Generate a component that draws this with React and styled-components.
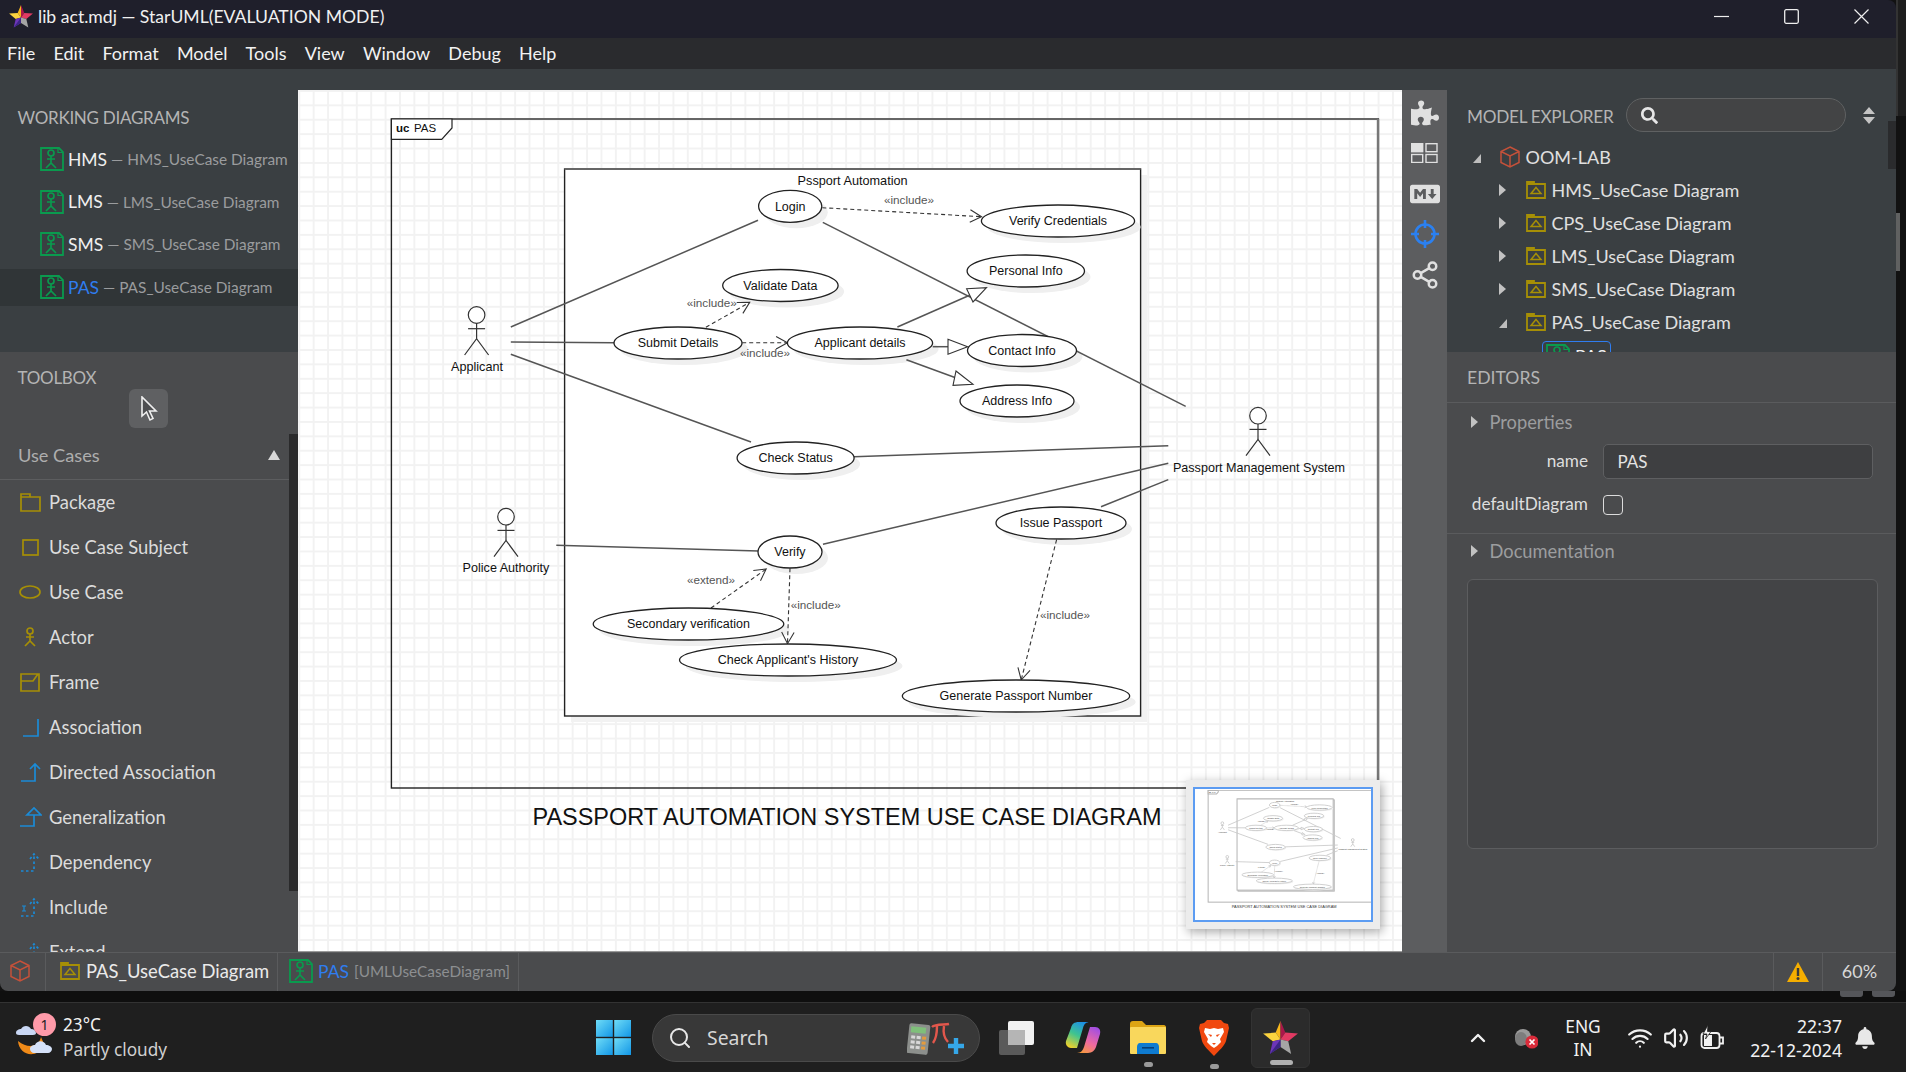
import React from 'react';
import styled, { createGlobalStyle } from 'styled-components';
import { Wifi, Volume2, ChevronUp, Search, Share2 } from 'lucide-react';
import { FaPuzzlePiece, FaMarkdown, FaSearch, FaBell } from 'react-icons/fa';

const UI_FONT = '"Lato", "Noto Sans", sans-serif';
const WIN_FONT = '"Noto Sans", "Open Sans", sans-serif';
const GOLD = '#a68f06';
const BLUE = '#1b8bd6';
const GREEN = '#0a9a4e';

const GlobalStyle = createGlobalStyle`
    html, body {
        margin: 0;
        padding: 0;
        width: 1906px;
        height: 1072px;
        overflow: hidden;
        background: #121212;
    }
    * { box-sizing: border-box; }
    svg { display: block; }
`;

const Page = styled.div`
    width: 1906px;
    height: 1072px;
    display: flex;
    flex-direction: column;
    font-family: ${UI_FONT};
    position: relative;
`;
const Window = styled.div`
    width: 1896px;
    height: 991px;
    display: flex;
    flex-direction: column;
    border-radius: 0 8px 8px 8px;
    overflow: hidden;
    position: relative;
`;
const TitleBar = styled.div`
    height: 38px;
    flex: none;
    background: #1f1f2b;
    display: flex;
    align-items: center;
    padding: 0 0 5px 9px;
    color: #f0f0f0;
    font-size: 17.6px;
    gap: 5px;
`;
const TitleControls = styled.div`
    margin-left: auto;
    display: flex;
`;
const TitleButton = styled.div`
    width: 70px;
    height: 33px;
    display: flex;
    align-items: center;
    justify-content: center;
`;
const MenuBar = styled.div`
    height: 31px;
    flex: none;
    background: #2a2b2e;
    display: flex;
    align-items: center;
    padding: 0 0 2px 7px;
    gap: 18.2px;
    color: #f2f2f2;
    font-size: 18px;
`;
const Workspace = styled.div`
    flex: 1;
    min-height: 0;
    display: flex;
`;
const LeftColumn = styled.div`
    width: 298px;
    flex: none;
    display: flex;
    flex-direction: column;
`;
const WorkingPanel = styled.div`
    height: 283px;
    flex: none;
    background: #3a3f42;
    padding-top: 37.5px;
`;
const PanelTitle = styled.div`
    height: 22px;
    line-height: 22px;
    padding-left: 17.5px;
    color: #b4b4b4;
    font-size: 17px;
    letter-spacing: -0.27px;
    white-space: nowrap;
`;
const WorkingRows = styled.div`
    margin-top: 12px;
    display: flex;
    flex-direction: column;
    gap: 5.7px;
`;
const WorkingRow = styled.div`
    height: 37px;
    display: flex;
    align-items: center;
    padding-left: 40px;
    gap: 4px;
    background: ${(p) => (p.$active ? '#303537' : 'transparent')};
    white-space: nowrap;
`;
const DiagramName = styled.span`
    font-size: 17.5px;
    color: ${(p) => (p.$active ? '#2f7df0' : '#f0f0f0')};
`;
const DiagramOwner = styled.span`
    font-size: 15.4px;
    color: #9a9c9e;
`;
const Toolbox = styled.div`
    flex: 1;
    min-height: 0;
    background: #4a4b4d;
    padding-top: 15px;
    position: relative;
    overflow: hidden;
`;
const CursorButton = styled.div`
    width: 39px;
    height: 39px;
    margin-left: 129px;
    background: #5f6062;
    border-radius: 6px;
    display: flex;
    align-items: center;
    justify-content: center;
`;
const SectionHeader = styled.div`
    width: 289px;
    height: 47px;
    margin-top: 4.5px;
    padding: 0 9px 1px 18px;
    display: flex;
    align-items: center;
    justify-content: space-between;
    border-bottom: 1px solid #5c5d5f;
    color: #aeaeae;
    font-size: 18.2px;
`;
const ToolRow = styled.div`
    height: 45px;
    display: flex;
    align-items: center;
    padding-left: 18px;
    gap: 7px;
    color: #dcdcdc;
    font-size: 18.4px;
    white-space: nowrap;
`;
const ToolScrollbar = styled.div`
    position: absolute;
    left: 289px;
    top: 82px;
    width: 9px;
    height: 457px;
    background: #2a2a2b;
`;
const CenterColumn = styled.div`
    width: 1104px;
    flex: none;
    display: flex;
    flex-direction: column;
`;
const TopGap = styled.div`
    height: 21px;
    flex: none;
    background: #3a3f42;
`;
const Canvas = styled.div`
    flex: 1;
    min-height: 0;
    position: relative;
    background-color: #fff;
    background-image:
        linear-gradient(to right, #f2f2f2 2px, transparent 2px),
        linear-gradient(to bottom, #f2f2f2 2px, transparent 2px);
    background-size: 14.4px 14.4px;
    background-position: 0.3px 0px;
    border-bottom: 1px solid #9a9a9a;
`;
const Minimap = styled.div`
    position: absolute;
    left: 888px;
    top: 690px;
    width: 194px;
    height: 149px;
    padding: 7px;
    background: #ececec;
    box-shadow: 2px 3px 10px rgba(0, 0, 0, 0.35);
`;
const MinimapView = styled.div`
    width: 100%;
    height: 100%;
    background: #fff;
    border: 2px solid #5c9cf2;
    overflow: hidden;
    line, polyline, ellipse, circle, polygon {
        stroke: #c8c8c8;
        stroke-width: 5px;
    }
    rect, path {
        stroke: #b4b4b4;
        stroke-width: 6px;
    }
    text {
        fill: #333;
    }
`;
const IconStrip = styled.div`
    width: 45px;
    flex: none;
    background: #5c5d5f;
    display: flex;
    flex-direction: column;
`;
const StripIcons = styled.div`
    display: flex;
    flex-direction: column;
    align-items: center;
    padding-top: 2.5px;
`;
const StripSlot = styled.div`
    height: 40.5px;
    display: flex;
    align-items: center;
    justify-content: center;
    color: ${(p) => p.$color || '#e0e0e0'};
`;
const RightColumn = styled.div`
    flex: 1;
    min-width: 0;
    display: flex;
    flex-direction: column;
    position: relative;
`;
const ExplorerPanel = styled.div`
    height: 283px;
    flex: none;
    background: #3a3f42;
    padding-top: 29px;
    overflow: hidden;
    position: relative;
`;
const ExplorerHeader = styled.div`
    height: 34px;
    padding-left: 20px;
    display: flex;
    align-items: center;
    color: #b4b4b4;
    font-size: 17.2px;
    letter-spacing: -0.27px;
`;
const ExplorerTitle = styled.span`
    padding-top: 2px;
`;
const SearchBox = styled.div`
    width: 220px;
    height: 34px;
    margin-left: 12.5px;
    padding-left: 14px;
    border-radius: 17px;
    border: 1px solid #5f6162;
    background: #434445;
    display: flex;
    align-items: center;
    color: #e6e6e6;
`;
const SortIcon = styled.div`
    margin-left: 16px;
`;
const Tree = styled.div`
    margin-top: 8px;
`;
const TreeRow = styled.div`
    height: 33px;
    display: flex;
    align-items: center;
    padding-left: ${(p) => p.$indent}px;
    color: #e0e0e0;
    font-size: 18px;
    white-space: nowrap;
`;
const TreeArrow = styled.div`
    width: 12px;
    margin-right: 16.5px;
    display: flex;
    justify-content: center;
`;
const TreeLabel = styled.span`
    margin-left: 6px;
`;
const TreeChild = styled.div`
    width: 69px;
    height: 30px;
    margin: 3px 0 0 95px;
    padding-left: 3px;
    display: flex;
    align-items: center;
    gap: 5px;
    border: 1px solid #2f7df0;
    border-radius: 4px;
    color: #f0f0f0;
    font-size: 18px;
`;
const EditorsPanel = styled.div`
    flex: 1;
    min-height: 0;
    background: #4a4b4d;
`;
const EditorsTitle = styled.div`
    height: 51px;
    padding-left: 20px;
    display: flex;
    align-items: center;
    border-bottom: 1px solid #5a5b5d;
    color: #b4b4b4;
    font-size: 17.6px;
`;
const Disclosure = styled.div`
    height: 37px;
    padding-left: 23px;
    display: flex;
    align-items: center;
    gap: 9.5px;
    color: #9c9d9f;
    font-size: 18.3px;
`;
const PropertyGrid = styled.div`
    display: grid;
    grid-template-columns: 141px 270px;
    column-gap: 14.5px;
    row-gap: 14px;
    align-items: center;
    padding: 4px 0 16px;
    border-bottom: 1px solid #5a5b5d;
`;
const PropertyLabel = styled.div`
    text-align: right;
    padding-bottom: 3px;
    color: #dedede;
    font-size: 17.2px;
`;
const PropertyInput = styled.div`
    height: 35px;
    padding-left: 14px;
    display: flex;
    align-items: center;
    border: 1px solid #5e5f61;
    border-radius: 5px;
    background: #3e3f41;
    color: #e4e4e4;
    font-size: 17px;
`;
const Checkbox = styled.div`
    width: 20px;
    height: 20px;
    border: 1px solid #dcdcdc;
    border-radius: 4px;
`;
const DocBlock = styled.div`
    margin-top: -2px;
`;
const DocArea = styled.div`
    width: 411px;
    height: 270px;
    margin: 10px 0 0 20px;
    border: 1px solid #5c5d5f;
    border-radius: 6px;
    background: #434446;
`;
const InnerScroll = styled.div`
    position: absolute;
    left: 441px;
    top: 52px;
    width: 8px;
    height: 48px;
    background: #2a2b2d;
`;
const StatusBar = styled.div`
    height: 39px;
    flex: none;
    display: flex;
    align-items: stretch;
    background: #4a4b4d;
    border-top: 1px solid #5a5b5d;
`;
const StatusCell = styled.div`
    width: ${(p) => p.$w}px;
    flex: none;
    display: flex;
    align-items: center;
    padding: 0 0 2px ${(p) => p.$pad}px;
    gap: ${(p) => p.$gap || 0}px;
    border-right: 1px solid #5a5b5d;
    white-space: nowrap;
    font-size: 18.4px;
    color: #eaeaea;
`;
const StatusSpacer = styled.div`
    flex: 1;
`;
const StatusWarn = styled.div`
    width: 50px;
    flex: none;
    display: flex;
    align-items: center;
    justify-content: center;
    border-left: 1px solid #5a5b5d;
    border-right: 1px solid #5a5b5d;
`;
const StatusLast = styled.div`
    width: 73px;
    flex: none;
    display: flex;
    align-items: center;
    justify-content: center;
    padding-bottom: 2px;
    font-size: 18px;
    color: #d8d8d8;
`;
const MutedType = styled.span`
    font-size: 15.3px;
    color: #8d8f91;
`;
const EdgeScroll = styled.div`
    position: absolute;
    left: 1896px;
    top: 213px;
    width: 4px;
    height: 58px;
    background: #606161;
`;
const EdgeStrip = styled.div`
    position: absolute;
    left: 1896px;
    top: 0;
    width: 10px;
    height: 116px;
    background: #1e1e1e;
    border-left: 2px solid #333;
`;
const Band = styled.div`
    height: 12px;
    flex: none;
    display: flex;
    justify-content: flex-end;
    gap: 9px;
    padding-right: 11px;
    background: #0f0f0f;
    border-bottom: 1px solid #333;
`;
const PeekTab = styled.div`
    width: 23px;
    height: 6px;
    background: #55565a;
    border-radius: 0 0 3px 3px;
`;
const Taskbar = styled.div`
    flex: 1;
    display: flex;
    align-items: center;
    background: #1f1f1f;
    color: #f2f2f2;
    font-family: ${WIN_FONT};
`;
const WeatherBlock = styled.div`
    width: 596px;
    flex: none;
    display: flex;
    align-items: center;
    padding-left: 16px;
    gap: 11px;
`;
const WeatherIconBox = styled.div`
    width: 36px;
    height: 36px;
    position: relative;
`;
const WeatherBadge = styled.div`
    position: absolute;
    left: 17px;
    top: -7px;
    width: 23px;
    height: 23px;
    border-radius: 50%;
    background: #ff9aa9;
    color: #222;
    font-size: 14px;
    line-height: 23px;
    text-align: center;
`;
const WeatherText = styled.div`
    display: flex;
    flex-direction: column;
    line-height: 25px;
    font-size: 17.2px;
    margin-top: -2px;
`;
const WeatherSub = styled.span`
    color: #d0d0d0;
`;
const TaskSlot = styled.div`
    width: ${(p) => p.$w}px;
    margin-left: ${(p) => p.$ml || 0}px;
    flex: none;
    position: relative;
    display: flex;
    align-items: center;
    justify-content: center;
`;
const RunDot = styled.div`
    position: absolute;
    left: 50%;
    bottom: -13px;
    width: 9px;
    height: 5px;
    margin-left: -4px;
    border-radius: 3px;
    background: #9a9a9a;
`;
const TaskSearch = styled.div`
    width: 328px;
    height: 48px;
    margin-left: 21px;
    flex: none;
    padding: 0 12px 0 15px;
    display: flex;
    align-items: center;
    gap: 15px;
    border-radius: 24px;
    border: 1px solid #4a4a4a;
    background: #383838;
    color: #d6d6d6;
    font-size: 19.4px;
`;
const SearchArt = styled.div`
    margin-left: auto;
`;
const ActiveApp = styled.div`
    width: 59px;
    height: 60px;
    margin-left: 22px;
    flex: none;
    position: relative;
    display: flex;
    align-items: center;
    justify-content: center;
    border-radius: 6px;
    background: #2b2b2b;
    border: 1px solid #333;
`;
const ActiveBar = styled.div`
    position: absolute;
    left: 18px;
    bottom: 2px;
    width: 23px;
    height: 5px;
    border-radius: 3px;
    background: #b0b0b0;
`;
const LangBlock = styled.div`
    width: 40px;
    margin-left: 25px;
    flex: none;
    text-align: center;
    font-size: 17.4px;
    line-height: 23px;
`;
const ClockBlock = styled.div`
    width: 100px;
    margin-left: 17px;
    flex: none;
    text-align: right;
    font-size: 17.6px;
    line-height: 24px;
`;

const diagramFont = 'Liberation Sans, Arial, sans-serif';

const ellipses = [
    { cx: 790.2, cy: 206.3, rx: 31.6, ry: 16, label: 'Login' },
    { cx: 1058, cy: 221, rx: 76.6, ry: 16, label: 'Verify Credentials' },
    { cx: 1025.8, cy: 271, rx: 58.7, ry: 16, label: 'Personal Info' },
    { cx: 780.4, cy: 285.5, rx: 57.7, ry: 16, label: 'Validate Data' },
    { cx: 678, cy: 343, rx: 64, ry: 16, label: 'Submit Details' },
    { cx: 860, cy: 343, rx: 72.6, ry: 16, label: 'Applicant details' },
    { cx: 1022, cy: 350.5, rx: 54.5, ry: 16, label: 'Contact Info' },
    { cx: 1017, cy: 401, rx: 57, ry: 16, label: 'Address Info' },
    { cx: 795.6, cy: 458, rx: 58.5, ry: 16, label: 'Check Status' },
    { cx: 790, cy: 552, rx: 32, ry: 16, label: 'Verify' },
    { cx: 1061, cy: 523, rx: 65, ry: 16, label: 'Issue Passport' },
    { cx: 688.5, cy: 624, rx: 95.3, ry: 16, label: 'Secondary verification' },
    { cx: 788, cy: 660, rx: 108.5, ry: 16, label: "Check Applicant's History" },
    { cx: 1016, cy: 696, rx: 113.7, ry: 16, label: 'Generate Passport Number' },
];

const assocLines = [
    [510.8, 327, 758, 220.3],
    [510.8, 342, 614.3, 342.7],
    [510.8, 354.3, 751, 442],
    [822.8, 222.3, 1185.7, 406.4],
    [854, 456.7, 1168.3, 445.7],
    [823, 544.3, 1168.3, 463.2],
    [1101, 506.7, 1168.3, 479.6],
    [556.3, 545.3, 758.5, 551],
    [897.4, 327, 969.6, 295.3],
    [932.7, 346.7, 948, 346.7],
    [906.4, 359.7, 955.6, 377.7],
];

const dashedLines = [
    [822.3, 207.7, 981.5, 216.7],
    [705.9, 327.3, 749.7, 302.3],
    [742.2, 342.7, 787.5, 342.7],
    [711, 608, 766.2, 569],
    [790, 568.3, 787.5, 643.7],
    [1056.6, 539.7, 1021.2, 680],
];

const stereotypes = [
    { x: 909, y: 199, t: '«include»' },
    { x: 711.8, y: 302, t: '«include»' },
    { x: 765, y: 352, t: '«include»' },
    { x: 711, y: 579, t: '«extend»' },
    { x: 815.7, y: 604, t: '«include»' },
    { x: 1065, y: 614, t: '«include»' },
];

const triangles = [
    '966.6,288.7 986.5,287.7 973,302',
    '948,339.3 967.6,346.7 948,354.3',
    '956,371 973,384.3 953,385.3',
];

const actors = [
    { x: 476.6, y: 315, label: 'Applicant', lx: 477, ly: 366.7 },
    { x: 506, y: 516.7, label: 'Police Authority', lx: 506, ly: 567.7 },
    { x: 1258, y: 415.7, label: 'Passport Management System', lx: 1259, ly: 467.5 },
];

// open arrow head, worked out from the direction of the dashed line
const arrowBarbs = ([x1, y1, x2, y2]) => {
    const a = Math.atan2(y2 - y1, x2 - x1);
    const len = 13;
    const p = (d) => `${x2 - len * Math.cos(a + d)},${y2 - len * Math.sin(a + d)}`;
    return `${p(0.5)} ${x2},${y2} ${p(-0.5)}`;
};

const centerText = {
    textAnchor: 'middle',
    dominantBaseline: 'central',
    fontFamily: diagramFont,
};

const DiagramShapes = () => (
    <g>
        <rect x="391.4" y="119" width="987" height="669" fill="none" stroke="#222" strokeWidth="1.4" />
        <line x1="391" y1="119" x2="1378" y2="119" stroke="#666" strokeWidth="2" />
        <line x1="1378" y1="119" x2="1378" y2="788" stroke="#777" strokeWidth="2.4" />
        <path d="M391.4 119 H452 V128 L441.7 139.3 H391.4 Z" fill="#fff" stroke="#222" strokeWidth="1.2" />
        <text y="128" fontFamily={diagramFont} fontSize="11.5" dominantBaseline="central" fill="#111">
            <tspan x="396" fontWeight="700">uc</tspan>
            <tspan x="414">PAS</tspan>
        </text>

        <rect x="571" y="175" width="576" height="547" fill="#f2f2f2" stroke="none" />
        <rect x="564.6" y="169" width="576" height="547" fill="#fff" stroke="#222" strokeWidth="1.4" />
        <line x1="564.6" y1="169" x2="1140.6" y2="169" stroke="#666" strokeWidth="2" />
        <text x="852.6" y="181" fontSize="12.7" fill="#111" {...centerText}>Pssport Automation</text>

        {ellipses.map((e) => (
            <ellipse key={`s-${e.label}`} cx={e.cx + 6} cy={e.cy + 6} rx={e.rx} ry={e.ry} fill="#efefef" style={{ stroke: 'none' }} />
        ))}

        {assocLines.map(([x1, y1, x2, y2]) => (
            <line key={`${x1}-${y1}`} x1={x1} y1={y1} x2={x2} y2={y2} stroke="#555" strokeWidth="1.5" />
        ))}
        {dashedLines.map((l) => (
            <g key={`${l[0]}-${l[1]}`} stroke="#333" fill="none" strokeWidth="1.1">
                <line x1={l[0]} y1={l[1]} x2={l[2]} y2={l[3]} strokeDasharray="4 3" />
                <polyline points={arrowBarbs(l)} />
            </g>
        ))}
        {triangles.map((points) => (
            <polygon key={points} points={points} fill="#fff" stroke="#333" strokeWidth="1.1" />
        ))}

        {ellipses.map((e) => (
            <g key={e.label}>
                <ellipse cx={e.cx} cy={e.cy} rx={e.rx} ry={e.ry} fill="#fff" stroke="#222" strokeWidth="1.3" />
                <text x={e.cx} y={e.cy + 0.3} fontSize="12.5" fill="#111" {...centerText}>{e.label}</text>
            </g>
        ))}

        {stereotypes.map((s) => (
            <text key={`${s.x}-${s.y}`} x={s.x} y={s.y} fontSize="11.7" fill="#555" {...centerText}>{s.t}</text>
        ))}

        {actors.map((a) => (
            <g key={a.label}>
                <g fill="none" stroke="#333" strokeWidth="1.2">
                    <circle cx={a.x} cy={a.y} r="8.3" fill="#fff" />
                    <line x1={a.x} y1={a.y + 8.3} x2={a.x} y2={a.y + 23.7} />
                    <line x1={a.x - 8.5} y1={a.y + 13.7} x2={a.x + 8.5} y2={a.y + 13.7} />
                    <polyline points={`${a.x - 12},${a.y + 40} ${a.x},${a.y + 23.7} ${a.x + 12},${a.y + 40}`} />
                </g>
                <text x={a.lx} y={a.ly} fontSize="12.6" fill="#111" {...centerText}>{a.label}</text>
            </g>
        ))}

        <text x="847" y="817" fontSize="23.47" fill="#111" {...centerText}>
            PASSPORT AUTOMATION SYSTEM USE CASE DIAGRAM
        </text>
    </g>
);

const StarLogo = ({ size = 24 }) => (
    <svg width={size} height={size * 0.94} viewBox="0 0 36 34">
        <polygon points="18,0 13,12 18,19" fill="#f8b91c" />
        <polygon points="13,12 0,13 10,21 18,19" fill="#fbd33f" />
        <polygon points="10,21 7,34 18,27 18,19" fill="#6c35b8" />
        <polygon points="18,0 23,12 18,19" fill="#a9174a" />
        <polygon points="23,12 36,13 26,21 18,19" fill="#e23a63" />
        <polygon points="26,21 29,34 18,27 18,19" fill="#a5a5a5" />
        <polygon points="18,27 7,34 18,19" fill="#3c2585" />
    </svg>
);

const Figure = ({ x = 12, y = 5, color }) => (
    <g fill="none" stroke={color} strokeWidth="1.7">
        <circle cx={x} cy={y} r="3" />
        <path d={`M${x} ${y + 3}V${y + 10}M${x - 4} ${y + 6}H${x + 4}M${x - 5} ${y + 15}L${x} ${y + 10}L${x + 5} ${y + 15}`} />
    </g>
);

const DiagramIcon = () => (
    <svg width="24" height="24" viewBox="0 0 24 24" style={{ flex: 'none' }}>
        <path d="M1 1H19L23 5V23H1Z" fill="none" stroke={GREEN} strokeWidth="1.8" />
        <path d="M18 1V5.5H23" fill="none" stroke={GREEN} strokeWidth="1.2" />
        <Figure x={11} y={6} color={GREEN} />
    </svg>
);

const FolderDiagramIcon = () => (
    <svg width="20" height="18" viewBox="0 0 20 18" style={{ flex: 'none' }}>
        <path d="M1 3H19V17H1ZM1 3V1H8V3" fill="none" stroke={GOLD} strokeWidth="1.8" />
        <path d="M10 6.5L15 12.5H5Z" fill="none" stroke={GOLD} strokeWidth="1.5" />
    </svg>
);

const CubeIcon = () => (
    <svg width="20" height="22" viewBox="0 0 20 22" style={{ flex: 'none' }}>
        <path d="M10 1L19 5.5V16.5L10 21L1 16.5V5.5ZM1 5.5L10 10L19 5.5M10 10V21" fill="none" stroke="#c4513a" strokeWidth="1.5" />
    </svg>
);

const Arrow = ({ down }) => (
    <svg width="10" height="14" viewBox="0 0 10 14">
        {down ? (
            <polygon points="1,13 9,13 9,4" fill="#bdbdbd" />
        ) : (
            <polygon points="1,1 8,7 1,13" fill="#c2c2c2" />
        )}
    </svg>
);

const ToolSvg = ({ children }) => (
    <svg width="24" height="22" viewBox="0 0 24 22" style={{ flex: 'none' }} fill="none" strokeWidth="1.7">
        {children}
    </svg>
);

const tools = [
    { name: 'Package', icon: <path d="M3 6H22V20H3ZM3 6V3H12V6" stroke={GOLD} /> },
    { name: 'Use Case Subject', icon: <rect x="5" y="4" width="15" height="15" stroke={GOLD} /> },
    { name: 'Use Case', icon: <ellipse cx="12" cy="11" rx="10" ry="6" stroke={GOLD} /> },
    { name: 'Actor', icon: <Figure x={12} y={5} color={GOLD} /> },
    { name: 'Frame', icon: <path d="M3 3H21V20H3ZM3 10H15L20 3" stroke={GOLD} /> },
    { name: 'Association', icon: <path d="M5 20H20V3" stroke={BLUE} /> },
    { name: 'Directed Association', icon: <path d="M3 20H17V3M12 8L17 3L22 8" stroke={BLUE} /> },
    { name: 'Generalization', icon: <path d="M2 20H16V9M9 9H23L16 2Z" stroke={BLUE} /> },
    { name: 'Dependency', icon: <path d="M3 20H16V4M12 8L16 3L21 8" stroke={BLUE} strokeDasharray="2.5 2.5" /> },
    {
        name: 'Include',
        icon: (
            <>
                <path d="M3 20H16V4M12 8L16 3L21 8" stroke={BLUE} strokeDasharray="2.5 2.5" />
                <path d="M4 10H8M6 10V15M4 15H8" stroke={BLUE} strokeWidth="1.2" />
            </>
        ),
    },
    { name: 'Extend', icon: <path d="M3 20H16V4M12 8L16 3L21 8" stroke={BLUE} strokeDasharray="2.5 2.5" /> },
];

const workingDiagrams = [
    { name: 'HMS', owner: '— HMS_UseCase Diagram' },
    { name: 'LMS', owner: '— LMS_UseCase Diagram' },
    { name: 'SMS', owner: '— SMS_UseCase Diagram' },
    { name: 'PAS', owner: '— PAS_UseCase Diagram', active: true },
];

const treeFolders = ['HMS_UseCase Diagram', 'CPS_UseCase Diagram', 'LMS_UseCase Diagram', 'SMS_UseCase Diagram'];

const WeatherArt = () => (
    <svg width="36" height="36" viewBox="0 0 36 36">
        <path d="M2 21C3 36 22 40 28 24L25 17C23 27 12 29 2 21Z" fill="#f08a18" />
        <path d="M0 13C0 10 3 9 5 9C7 5 13 5 15 9C18 9 20 11 20 13C20 14 19 15 17 15H3C1 15 0 14 0 13Z" fill="#c9d7f4" />
        <path d="M14 29C14 26 17 25 19 25C21 20 28 20 30 25C33 25 36 27 36 29C36 31 34 33 32 33H18C16 33 14 31 14 29Z" fill="#d5e1f8" />
    </svg>
);

const WinLogo = () => (
    <svg width="35" height="35" viewBox="0 0 35 35">
        <defs>
            <linearGradient id="winPane" x1="0" y1="0" x2="1" y2="1">
                <stop offset="0" stopColor="#6fdcf7" />
                <stop offset="1" stopColor="#1296e6" />
            </linearGradient>
        </defs>
        <rect x="0" y="0" width="16.8" height="16.8" fill="url(#winPane)" />
        <rect x="18.2" y="0" width="16.8" height="16.8" fill="url(#winPane)" />
        <rect x="0" y="18.2" width="16.8" height="16.8" fill="url(#winPane)" />
        <rect x="18.2" y="18.2" width="16.8" height="16.8" fill="url(#winPane)" />
    </svg>
);

const CalcArt = () => (
    <svg width="60" height="34" viewBox="0 0 60 34">
        <rect x="1" y="3" width="21" height="30" rx="2" fill="#8c8f8c" transform="rotate(6 11 18)" />
        <rect x="4" y="6" width="15" height="6" fill="#7fbf7a" transform="rotate(6 11 9)" />
        <g fill="#d8d8d8" transform="rotate(6 11 18)">
            <rect x="4" y="15" width="4" height="3" />
            <rect x="9.5" y="15" width="4" height="3" />
            <rect x="15" y="15" width="4" height="3" fill="#e49b3d" />
            <rect x="4" y="20" width="4" height="3" />
            <rect x="9.5" y="20" width="4" height="3" />
            <rect x="15" y="20" width="4" height="3" fill="#e49b3d" />
            <rect x="4" y="25" width="4" height="3" />
            <rect x="9.5" y="25" width="4" height="3" />
            <rect x="15" y="25" width="4" height="3" fill="#e49b3d" />
        </g>
        <path d="M25 6C28 3 38 4 42 3M30 5C30 12 29 18 26 22M37 5C36 11 37 17 41 21" fill="none" stroke="#e2574c" strokeWidth="2.4" />
        <path d="M49 17V33M41 25H57" stroke="#35a7e8" strokeWidth="4.4" />
    </svg>
);

const TaskViewArt = () => (
    <svg width="36" height="36" viewBox="0 0 36 36">
        <rect x="10" y="1" width="26" height="24" rx="2" fill="#f1f1f1" />
        <rect x="1" y="10" width="26" height="25" rx="2" fill="#5a5a5a" />
        <rect x="10" y="10" width="17" height="15" fill="#b5b5b5" />
    </svg>
);

const CopilotArt = () => (
    <svg width="36" height="33" viewBox="0 0 36 33">
        <defs>
            <linearGradient id="copL" x1="0.7" y1="0" x2="0.2" y2="1">
                <stop offset="0" stopColor="#1c8fe8" />
                <stop offset="0.5" stopColor="#3fc48f" />
                <stop offset="1" stopColor="#f2d12a" />
            </linearGradient>
            <linearGradient id="copR" x1="0.7" y1="0" x2="0.2" y2="1">
                <stop offset="0" stopColor="#a44fe0" />
                <stop offset="0.55" stopColor="#f06aa0" />
                <stop offset="1" stopColor="#f59a3c" />
            </linearGradient>
        </defs>
        <path d="M14 1C9 1 7 3 6 7L1 20C0 24 3 27 6 27L12 27L18 7C19 3 21 1 25 1Z" fill="url(#copL)" />
        <path d="M23 32C27 32 30 29 31 26L35 13C36 9 34 6 30 6L25 6L19 26C18 29 16 32 12 32Z" fill="url(#copR)" />
    </svg>
);

const ExplorerArt = () => (
    <svg width="36" height="33" viewBox="0 0 36 33">
        <path d="M0 3C0 1 1 0 3 0H12L16 4H34C35 4 36 5 36 6V8H0Z" fill="#dca414" />
        <rect x="0" y="6" width="36" height="27" rx="1" fill="#f9d75c" />
        <path d="M7 33V26C7 24 8 22 10 22H26C28 22 29 24 29 26V33Z" fill="#0f7bd0" />
        <rect x="12" y="26" width="12" height="1.6" fill="#063f78" />
    </svg>
);

const BraveArt = () => (
    <svg width="30" height="36" viewBox="0 0 30 36">
        <path d="M8 0H22L25 3L29 4L30 8L27 21C26 25 20 31 15 36C10 31 4 25 3 21L0 8L1 4L5 3Z" fill="#f1480f" />
        <path d="M6 8L11 9L15 8L19 9L24 8L25 12L21 19L22 22L18 26L15 28L12 26L8 22L9 19L5 12Z" fill="#fff" />
        <path d="M9 14L13 15L12 17ZM21 14L17 15L18 17ZM13 23H17L15 25Z" fill="#f1480f" />
    </svg>
);

const OneDriveArt = () => (
    <svg width="24" height="22" viewBox="0 0 24 22">
        <circle cx="9" cy="10" r="8" fill="#9a9a9a" />
        <ellipse cx="7" cy="12" rx="6" ry="7" fill="#7d7d7d" />
        <circle cx="18" cy="15" r="6.6" fill="#d92b3a" />
        <path d="M15.5 12.5L20.5 17.5M20.5 12.5L15.5 17.5" stroke="#fff" strokeWidth="1.7" />
    </svg>
);

const BatteryArt = () => (
    <svg width="26" height="26" viewBox="0 0 26 26" fill="none" stroke="#f0f0f0" strokeWidth="1.8">
        <rect x="2.5" y="8" width="18" height="15" rx="3" />
        <path d="M20.5 12.5H24V18.5H20.5" />
        <path d="M5 10H13V21H5Z" fill="#f0f0f0" stroke="none" />
        <path d="M9 0L4 9H8L6.5 14L12 6.5H8.5Z" fill="#f0f0f0" stroke="#1f1f1f" strokeWidth="0.8" />
    </svg>
);

const App = () => (
    <Page>
        <GlobalStyle />
        <EdgeStrip />
        <EdgeScroll />
        <Window>
            <TitleBar>
                <StarLogo size={24} />
                <span>lib act.mdj — StarUML(EVALUATION MODE)</span>
                <TitleControls>
                    <TitleButton>
                        <svg width="15" height="15" viewBox="0 0 15 15"><line x1="0" y1="7.5" x2="15" y2="7.5" stroke="#eee" strokeWidth="1.2" /></svg>
                    </TitleButton>
                    <TitleButton>
                        <svg width="15" height="15" viewBox="0 0 15 15"><rect x="0.7" y="0.7" width="13.6" height="13.6" rx="1.5" fill="none" stroke="#eee" strokeWidth="1.3" /></svg>
                    </TitleButton>
                    <TitleButton>
                        <svg width="15" height="15" viewBox="0 0 15 15"><path d="M0.5 0.5L14.5 14.5M14.5 0.5L0.5 14.5" stroke="#eee" strokeWidth="1.2" /></svg>
                    </TitleButton>
                </TitleControls>
            </TitleBar>
            <MenuBar>
                {['File', 'Edit', 'Format', 'Model', 'Tools', 'View', 'Window', 'Debug', 'Help'].map((m) => (
                    <span key={m}>{m}</span>
                ))}
            </MenuBar>
            <Workspace>
                <LeftColumn>
                    <WorkingPanel>
                        <PanelTitle>WORKING DIAGRAMS</PanelTitle>
                        <WorkingRows>
                            {workingDiagrams.map((d) => (
                                <WorkingRow key={d.name} $active={d.active}>
                                    <DiagramIcon />
                                    <DiagramName $active={d.active}>{d.name}</DiagramName>
                                    <DiagramOwner>{d.owner}</DiagramOwner>
                                </WorkingRow>
                            ))}
                        </WorkingRows>
                    </WorkingPanel>
                    <Toolbox>
                        <PanelTitle>TOOLBOX</PanelTitle>
                        <CursorButton>
                            <svg width="18" height="26" viewBox="0 0 18 26">
                                <path d="M2 1V20L6.5 16L10 24L13 22.5L9.5 15H16Z" fill="#4e4f51" stroke="#efefef" strokeWidth="1.6" />
                            </svg>
                        </CursorButton>
                        <SectionHeader>
                            <span>Use Cases</span>
                            <svg width="12" height="10" viewBox="0 0 12 10"><polygon points="6,0 12,10 0,10" fill="#d8d8d8" /></svg>
                        </SectionHeader>
                        {tools.map((t) => (
                            <ToolRow key={t.name}>
                                <ToolSvg>{t.icon}</ToolSvg>
                                <span>{t.name}</span>
                            </ToolRow>
                        ))}
                        <ToolScrollbar />
                    </Toolbox>
                </LeftColumn>
                <CenterColumn>
                    <TopGap />
                    <Canvas>
                        <svg width="1104" height="861" viewBox="298 90 1104 861">
                            <DiagramShapes />
                        </svg>
                        <Minimap>
                            <MinimapView>
                                <svg width="176" height="131" viewBox="313 110 1054 785">
                                    <DiagramShapes />
                                </svg>
                            </MinimapView>
                        </Minimap>
                    </Canvas>
                </CenterColumn>
                <IconStrip>
                    <TopGap />
                    <StripIcons>
                        <StripSlot><FaPuzzlePiece size={28} /></StripSlot>
                        <StripSlot>
                            <svg width="27" height="20" viewBox="0 0 27 20" fill="none" stroke="#e0e0e0" strokeWidth="1.4">
                                <rect x="0.7" y="0.7" width="11" height="8" fill="#e0e0e0" />
                                <rect x="15" y="0.7" width="11" height="8" />
                                <rect x="0.7" y="11.5" width="11" height="8" />
                                <rect x="15" y="11.5" width="11" height="8" />
                            </svg>
                        </StripSlot>
                        <StripSlot><FaMarkdown size={30} /></StripSlot>
                        <StripSlot>
                            <svg width="28" height="28" viewBox="0 0 28 28" fill="none" stroke="#2b80f0" strokeWidth="2.6">
                                <circle cx="14" cy="14" r="9.5" />
                                <path d="M14 0V8M14 20V28M0 14H8M20 14H28" />
                            </svg>
                        </StripSlot>
                        <StripSlot><Share2 size={30} strokeWidth={2} /></StripSlot>
                    </StripIcons>
                </IconStrip>
                <RightColumn>
                    <ExplorerPanel>
                        <ExplorerHeader>
                            <ExplorerTitle>MODEL EXPLORER</ExplorerTitle>
                            <SearchBox><FaSearch size={17} /></SearchBox>
                            <SortIcon>
                                <svg width="14" height="17" viewBox="0 0 14 17"><path d="M7 0L13 7H1ZM7 17L1 10H13Z" fill="#c4c4c4" /></svg>
                            </SortIcon>
                        </ExplorerHeader>
                        <Tree>
                            <TreeRow $indent={24}>
                                <TreeArrow><Arrow down /></TreeArrow>
                                <CubeIcon />
                                <TreeLabel>OOM-LAB</TreeLabel>
                            </TreeRow>
                            {treeFolders.map((f) => (
                                <TreeRow key={f} $indent={50}>
                                    <TreeArrow><Arrow /></TreeArrow>
                                    <FolderDiagramIcon />
                                    <TreeLabel>{f}</TreeLabel>
                                </TreeRow>
                            ))}
                            <TreeRow $indent={50}>
                                <TreeArrow><Arrow down /></TreeArrow>
                                <FolderDiagramIcon />
                                <TreeLabel>PAS_UseCase Diagram</TreeLabel>
                            </TreeRow>
                            <TreeChild>
                                <DiagramIcon />
                                <span>PAS</span>
                            </TreeChild>
                        </Tree>
                    </ExplorerPanel>
                    <EditorsPanel>
                        <EditorsTitle>EDITORS</EditorsTitle>
                        <Disclosure>
                            <Arrow />
                            <span>Properties</span>
                        </Disclosure>
                        <PropertyGrid>
                            <PropertyLabel>name</PropertyLabel>
                            <PropertyInput>PAS</PropertyInput>
                            <PropertyLabel>defaultDiagram</PropertyLabel>
                            <Checkbox />
                        </PropertyGrid>
                        <DocBlock>
                            <Disclosure>
                                <Arrow />
                                <span>Documentation</span>
                            </Disclosure>
                            <DocArea />
                        </DocBlock>
                    </EditorsPanel>
                    <InnerScroll />
                </RightColumn>
            </Workspace>
            <StatusBar>
                <StatusCell $w={46} $pad={10}><CubeIcon /></StatusCell>
                <StatusCell $w={232} $pad={14} $gap={6}>
                    <FolderDiagramIcon />
                    <span>PAS_UseCase Diagram</span>
                </StatusCell>
                <StatusCell $w={241} $pad={11} $gap={5}>
                    <DiagramIcon />
                    <DiagramName $active>PAS</DiagramName>
                    <MutedType>[UMLUseCaseDiagram]</MutedType>
                </StatusCell>
                <StatusSpacer />
                <StatusWarn>
                    <svg width="22" height="20" viewBox="0 0 22 20">
                        <path d="M11 0L22 20H0Z" fill="#f5ae00" />
                        <rect x="9.8" y="6" width="2.4" height="8" fill="#3a3a3a" />
                        <circle cx="11" cy="16.4" r="1.5" fill="#3a3a3a" />
                    </svg>
                </StatusWarn>
                <StatusLast>60%</StatusLast>
            </StatusBar>
        </Window>
        <Band>
            <PeekTab />
            <PeekTab />
        </Band>
        <Taskbar>
            <WeatherBlock>
                <WeatherIconBox>
                    <WeatherArt />
                    <WeatherBadge>1</WeatherBadge>
                </WeatherIconBox>
                <WeatherText>
                    <span>23°C</span>
                    <WeatherSub>Partly cloudy</WeatherSub>
                </WeatherText>
            </WeatherBlock>
            <TaskSlot $w={35}><WinLogo /></TaskSlot>
            <TaskSearch>
                <Search size={24} strokeWidth={2} color="#e8e8e8" />
                <span>Search</span>
                <SearchArt><CalcArt /></SearchArt>
            </TaskSearch>
            <TaskSlot $w={36} $ml={18}><TaskViewArt /></TaskSlot>
            <TaskSlot $w={36} $ml={31}><CopilotArt /></TaskSlot>
            <TaskSlot $w={36} $ml={29}><ExplorerArt /><RunDot /></TaskSlot>
            <TaskSlot $w={30} $ml={33}><BraveArt /><RunDot /></TaskSlot>
            <ActiveApp>
                <StarLogo size={35} />
                <ActiveBar />
            </ActiveApp>
            <TaskSlot $w={24} $ml={156}><ChevronUp size={24} strokeWidth={2.4} color="#f0f0f0" /></TaskSlot>
            <TaskSlot $w={24} $ml={24}><OneDriveArt /></TaskSlot>
            <LangBlock>
                <div>ENG</div>
                <div>IN</div>
            </LangBlock>
            <TaskSlot $w={26} $ml={24}><Wifi size={26} color="#f0f0f0" /></TaskSlot>
            <TaskSlot $w={26} $ml={10}><Volume2 size={26} color="#f0f0f0" /></TaskSlot>
            <TaskSlot $w={26} $ml={10}><BatteryArt /></TaskSlot>
            <ClockBlock>
                <div>22:37</div>
                <div>22-12-2024</div>
            </ClockBlock>
            <TaskSlot $w={22} $ml={12}><FaBell size={22} color="#e8e8e8" /></TaskSlot>
        </Taskbar>
    </Page>
);

export default App;
